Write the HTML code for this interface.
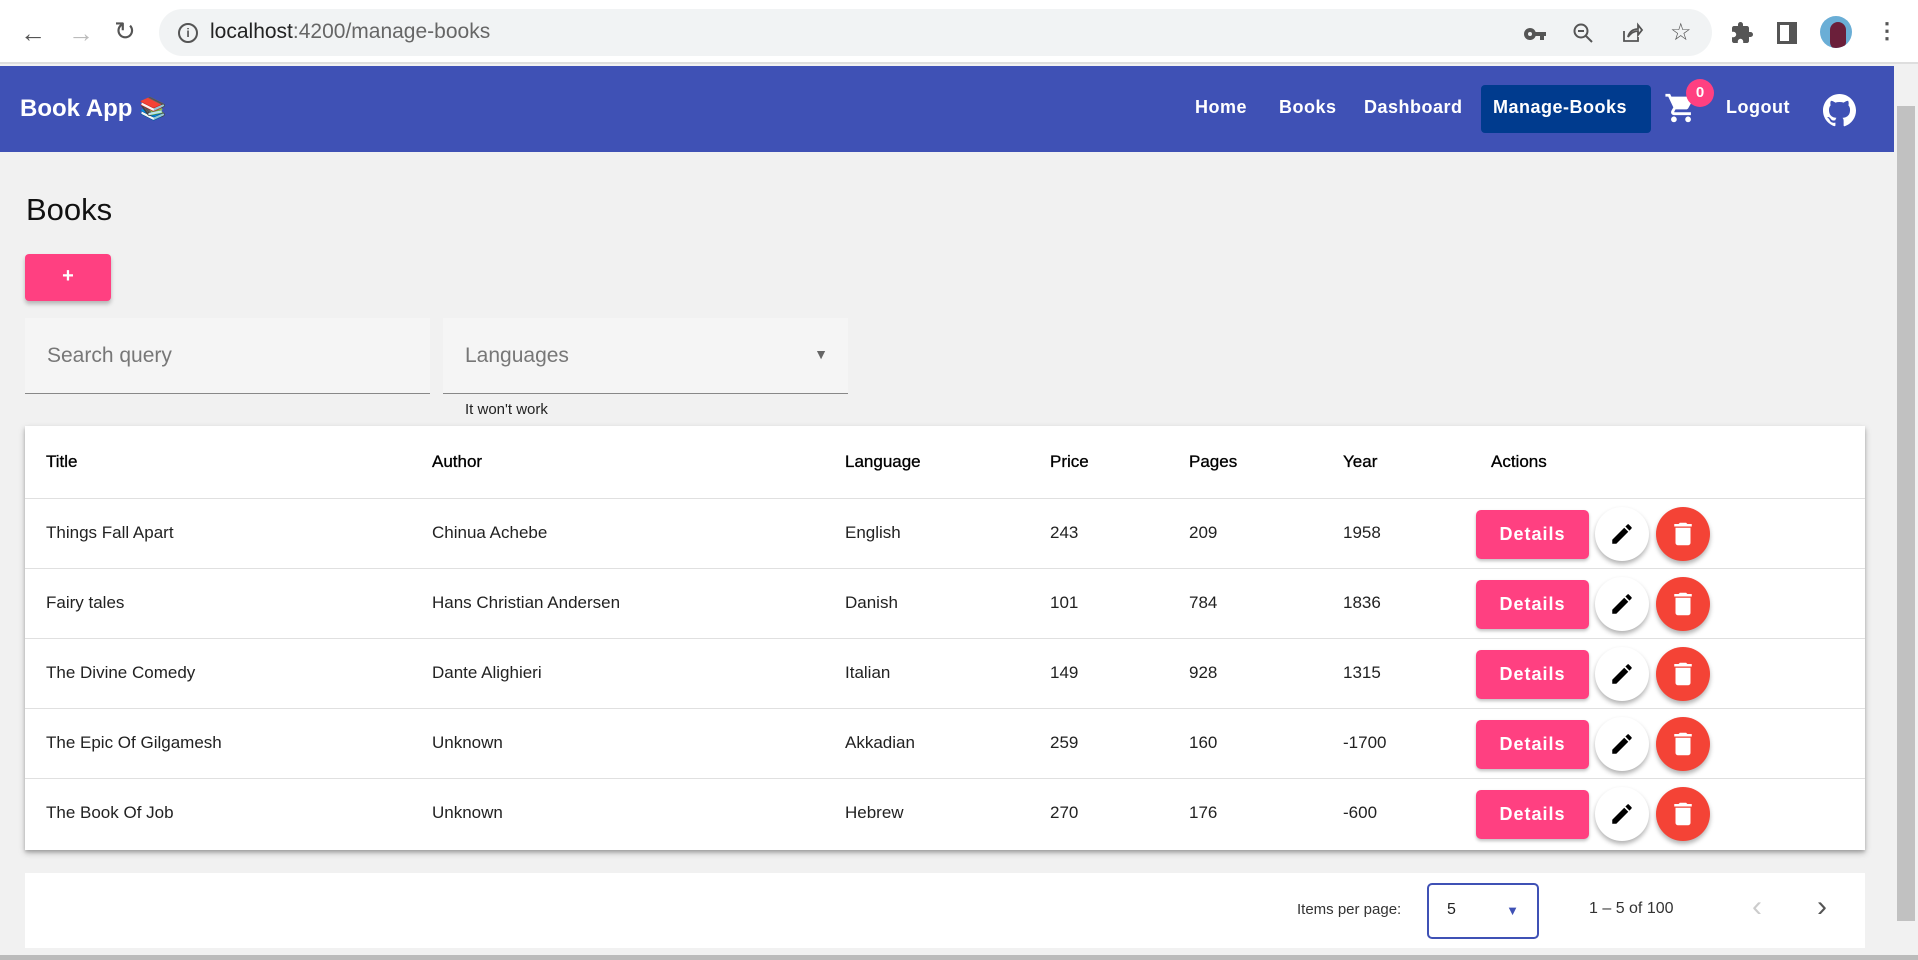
<!DOCTYPE html>
<html><head><meta charset="utf-8"><style>
*{box-sizing:border-box;margin:0;padding:0}
body{width:1918px;height:960px;overflow:hidden;background:#f1f1f1;font-family:"Liberation Sans",sans-serif;position:relative}
.abs{position:absolute}
.chrome{left:0;top:0;width:1918px;height:64px;background:#fff;border-bottom:2px solid #dedede}
.addr{left:159px;top:9px;width:1553px;height:47px;background:#f1f3f4;border-radius:24px}
.nav{left:0;top:66px;width:1894px;height:86px;background:#3f51b5;color:#fff}
.nav .t{font-weight:bold;font-size:24px;position:absolute;top:29px;left:20px}
.nl{position:absolute;top:31px;font-size:18px;font-weight:bold;letter-spacing:.5px}
.scroll{left:1894px;top:66px;width:24px;height:889px;background:#f1f1f1}
.card{left:25px;top:426px;width:1840px;height:424px;background:#fff;box-shadow:0 3px 6px rgba(0,0,0,.25),0 2px 3px rgba(0,0,0,.15)}
.row{position:absolute;left:0;width:1840px;height:70px;border-bottom:1px solid #e0e0e0;font-size:17px;color:#222}
.row span{position:absolute;top:24px}
.hdr span{color:#000;-webkit-text-stroke:0.3px #000}
.det{position:absolute;left:1451px;top:11px;width:113px;height:49px;background:#ff4081;border-radius:5px;color:#fff;font-weight:bold;font-size:18px;text-align:center;line-height:49px;letter-spacing:1px;box-shadow:0 2px 3px rgba(0,0,0,.25)}
.circ{position:absolute;top:8px;width:54px;height:54px;border-radius:50%;box-shadow:0 3px 5px rgba(0,0,0,.3)}
.fld{background:#f5f5f5;border-bottom:1px solid #888;height:76px;top:318px;font-size:21px;color:#777}
</style></head><body>
<div class="abs chrome"></div>
<div class="abs" style="left:20px;top:18px;font-size:26px;color:#555">&#8592;</div>
<div class="abs" style="left:68px;top:18px;font-size:26px;color:#bbb">&#8594;</div>
<div class="abs" style="left:114px;top:16px;font-size:26px;color:#555">&#8635;</div>
<div class="abs addr"></div>
<div class="abs" style="left:178px;top:23px;width:20px;height:20px;border:2px solid #555;border-radius:50%;font-size:12px;text-align:center;line-height:16px;color:#555;font-weight:bold">i</div>
<div class="abs" style="left:210px;top:20px;font-size:21px;color:#222">localhost<span style="color:#666">:4200/manage-books</span></div>
<svg class="abs" style="left:1523px;top:22px" width="24" height="24" viewBox="0 0 24 24"><path fill="#555" d="M12.65 10A6 6 0 1 0 12.65 14H17v4h4v-4h2v-4H12.65zM7 14a2 2 0 1 1 0-4 2 2 0 0 1 0 4z"/></svg>
<svg class="abs" style="left:1571px;top:21px" width="24" height="24" viewBox="0 0 24 24"><circle cx="10" cy="10" r="6.5" fill="none" stroke="#555" stroke-width="2"/><path d="M7 10h6M15 15l6 6" stroke="#555" stroke-width="2"/></svg>
<svg class="abs" style="left:1620px;top:21px" width="24" height="24" viewBox="0 0 24 24"><path fill="none" stroke="#555" stroke-width="1.8" d="M4 10v10h14v-4M8 16c1-5 5-8 10-8V4l4 5-4 5v-4c-4 0-7 2-10 6z"/></svg>
<div class="abs" style="left:1670px;top:18px;font-size:24px;color:#555">&#9734;</div>
<svg class="abs" style="left:1730px;top:21px" width="24" height="24" viewBox="0 0 24 24"><path fill="#555" d="M20.5 11H19V7c0-1.1-.9-2-2-2h-4V3.5a2.5 2.5 0 0 0-5 0V5H4c-1.1 0-2 .9-2 2v3.8h1.5a2.7 2.7 0 0 1 0 5.4H2V20c0 1.1.9 2 2 2h3.8v-1.5a2.7 2.7 0 0 1 5.4 0V22H17c1.1 0 2-.9 2-2v-4h1.5a2.5 2.5 0 0 0 0-5z"/></svg>
<div class="abs" style="left:1777px;top:22px;width:20px;height:22px;border:3px solid #555;border-right-width:8px"></div>
<div class="abs" style="left:1820px;top:16px;width:32px;height:32px;border-radius:50%;background:#6aaed6;overflow:hidden"><div style="position:absolute;left:10px;top:6px;width:16px;height:28px;border-radius:8px;background:#6b1f3a"></div></div>
<div class="abs" style="left:1876px;top:18px;font-size:22px;color:#555;font-weight:bold">&#8942;</div>
<div class="abs nav">
<div class="t">Book App <span style="font-size:22px">📚</span></div>
<div class="nl" style="left:1195px">Home</div>
<div class="nl" style="left:1279px">Books</div>
<div class="nl" style="left:1364px">Dashboard</div>
<div style="position:absolute;left:1481px;top:19px;width:170px;height:48px;background:#003b8e;border-radius:4px"></div>
<div class="nl" style="left:1493px">Manage-Books</div>
<svg style="position:absolute;left:1664px;top:25px" width="34" height="34" viewBox="0 0 24 24"><path fill="#fff" d="M7 18c-1.1 0-2 .9-2 2s.9 2 2 2 2-.9 2-2-.9-2-2-2zM1 2v2h2l3.6 7.6-1.4 2.4c-.1.3-.2.6-.2 1 0 1.1.9 2 2 2h12v-2H7.4c-.1 0-.2-.1-.2-.2v-.1l.9-1.7h7.4c.8 0 1.4-.4 1.700-1l3.6-6.5c.1-.2.1-.3.1-.5 0-.6-.4-1-1-1H5.2l-.9-2H1zm16 16c-1.1 0-2 .9-2 2s.9 2 2 2 2-.9 2-2-.9-2-2-2z"/></svg>
<div style="position:absolute;left:1686px;top:13px;width:28px;height:28px;border-radius:50%;background:#ff4081;font-size:15px;font-weight:bold;text-align:center;line-height:28px">0</div>
<div class="nl" style="left:1726px">Logout</div>
<svg style="position:absolute;left:1823px;top:28px" width="33" height="33" viewBox="0 0 16 16"><path fill="#fff" d="M8 0C3.58 0 0 3.58 0 8c0 3.54 2.290 6.53 5.47 7.59.4.07.55-.17.55-.38v-1.33c-2.230.48-2.7-1.07-2.7-1.07-.36-.92-.89-1.17-.89-1.17-.73-.5.05-.49.05-.49.8.06 1.23.83 1.23.83.71 1.22 1.87.87 2.33.66.07-.52.28-.87.51-1.07-1.78-.2-3.64-.89-3.64-3.95 0-.87.31-1.59.82-2.15-.08-.2-.36-1.02.08-2.12 0 0 .67-.21 2.2.82a7.6 7.6 0 0 1 4 0c1.53-1.04 2.2-.82 2.2-.82.44 1.1.16 1.92.08 2.12.51.56.82 1.27.82 2.15 0 3.07-1.87 3.75-3.65 3.95.29.25.54.73.54 1.48v2.2c0 .21.15.46.55.38A8.01 8.01 0 0 0 16 8c0-4.42-3.58-8-8-8z"/></svg>
</div>
<div class="abs scroll"><div style="position:absolute;left:3px;top:40px;width:18px;height:815px;background:#c1c1c1"></div></div>
<div class="abs" style="left:26px;top:192px;font-size:31px;color:#111">Books</div>
<div class="abs" style="left:25px;top:254px;width:86px;height:47px;background:#ff4081;border-radius:4px;color:#fff;font-size:20px;font-weight:bold;text-align:center;line-height:45px;box-shadow:0 3px 4px rgba(0,0,0,.25)">+</div>
<div class="abs fld" style="left:25px;width:405px"><span style="position:absolute;left:22px;top:26px">Search query</span></div>
<div class="abs fld" style="left:443px;width:405px"><span style="position:absolute;left:22px;top:26px">Languages</span><span style="position:absolute;right:20px;top:28px;font-size:14px;color:#666">&#9660;</span></div>
<div class="abs" style="left:465px;top:401px;font-size:15px;color:#222">It won't work</div>
<div class="abs card">
<div class="row hdr" style="top:0;height:73px"><span style="left:21px;top:26px">Title</span><span style="left:407px;top:26px">Author</span><span style="left:820px;top:26px">Language</span><span style="left:1025px;top:26px">Price</span><span style="left:1164px;top:26px">Pages</span><span style="left:1318px;top:26px">Year</span><span style="left:1466px;top:26px">Actions</span></div>
<div class="row" style="top:73px"><span style="left:21px">Things Fall Apart</span><span style="left:407px">Chinua Achebe</span><span style="left:820px">English</span><span style="left:1025px">243</span><span style="left:1164px">209</span><span style="left:1318px">1958</span><div class="det">Details</div><div class="circ" style="left:1570px;background:#fff"><svg style="margin:14px" width="26" height="26" viewBox="0 0 24 24"><path d="M3 17.25V21h3.75L17.81 9.94l-3.75-3.75L3 17.25zM20.71 7.04a1 1 0 0 0 0-1.41l-2.34-2.34a1 1 0 0 0-1.41 0l-1.83 1.83 3.75 3.75 1.83-1.83z"/></svg></div><div class="circ" style="left:1631px;background:#f44336"><svg style="margin:12px" width="30" height="30" viewBox="0 0 24 24"><path fill="#fff" d="M6 19c0 1.1.9 2 2 2h8c1.1 0 2-.9 2-2V7H6v12zM19 4h-3.5l-1-1h-5l-1 1H5v2h14V4z"/></svg></div></div>
<div class="row" style="top:143px"><span style="left:21px">Fairy tales</span><span style="left:407px">Hans Christian Andersen</span><span style="left:820px">Danish</span><span style="left:1025px">101</span><span style="left:1164px">784</span><span style="left:1318px">1836</span><div class="det">Details</div><div class="circ" style="left:1570px;background:#fff"><svg style="margin:14px" width="26" height="26" viewBox="0 0 24 24"><path d="M3 17.25V21h3.75L17.81 9.94l-3.75-3.75L3 17.25zM20.71 7.04a1 1 0 0 0 0-1.41l-2.34-2.34a1 1 0 0 0-1.41 0l-1.83 1.83 3.75 3.75 1.83-1.83z"/></svg></div><div class="circ" style="left:1631px;background:#f44336"><svg style="margin:12px" width="30" height="30" viewBox="0 0 24 24"><path fill="#fff" d="M6 19c0 1.1.9 2 2 2h8c1.1 0 2-.9 2-2V7H6v12zM19 4h-3.5l-1-1h-5l-1 1H5v2h14V4z"/></svg></div></div>
<div class="row" style="top:213px"><span style="left:21px">The Divine Comedy</span><span style="left:407px">Dante Alighieri</span><span style="left:820px">Italian</span><span style="left:1025px">149</span><span style="left:1164px">928</span><span style="left:1318px">1315</span><div class="det">Details</div><div class="circ" style="left:1570px;background:#fff"><svg style="margin:14px" width="26" height="26" viewBox="0 0 24 24"><path d="M3 17.25V21h3.75L17.81 9.94l-3.75-3.75L3 17.25zM20.71 7.04a1 1 0 0 0 0-1.41l-2.34-2.34a1 1 0 0 0-1.41 0l-1.83 1.83 3.75 3.75 1.83-1.83z"/></svg></div><div class="circ" style="left:1631px;background:#f44336"><svg style="margin:12px" width="30" height="30" viewBox="0 0 24 24"><path fill="#fff" d="M6 19c0 1.1.9 2 2 2h8c1.1 0 2-.9 2-2V7H6v12zM19 4h-3.5l-1-1h-5l-1 1H5v2h14V4z"/></svg></div></div>
<div class="row" style="top:283px"><span style="left:21px">The Epic Of Gilgamesh</span><span style="left:407px">Unknown</span><span style="left:820px">Akkadian</span><span style="left:1025px">259</span><span style="left:1164px">160</span><span style="left:1318px">-1700</span><div class="det">Details</div><div class="circ" style="left:1570px;background:#fff"><svg style="margin:14px" width="26" height="26" viewBox="0 0 24 24"><path d="M3 17.25V21h3.75L17.81 9.94l-3.75-3.75L3 17.25zM20.71 7.04a1 1 0 0 0 0-1.41l-2.34-2.34a1 1 0 0 0-1.41 0l-1.83 1.83 3.75 3.75 1.83-1.83z"/></svg></div><div class="circ" style="left:1631px;background:#f44336"><svg style="margin:12px" width="30" height="30" viewBox="0 0 24 24"><path fill="#fff" d="M6 19c0 1.1.9 2 2 2h8c1.1 0 2-.9 2-2V7H6v12zM19 4h-3.5l-1-1h-5l-1 1H5v2h14V4z"/></svg></div></div>
<div class="row" style="top:353px;border-bottom:none"><span style="left:21px">The Book Of Job</span><span style="left:407px">Unknown</span><span style="left:820px">Hebrew</span><span style="left:1025px">270</span><span style="left:1164px">176</span><span style="left:1318px">-600</span><div class="det">Details</div><div class="circ" style="left:1570px;background:#fff"><svg style="margin:14px" width="26" height="26" viewBox="0 0 24 24"><path d="M3 17.25V21h3.75L17.81 9.94l-3.75-3.75L3 17.25zM20.71 7.04a1 1 0 0 0 0-1.41l-2.34-2.34a1 1 0 0 0-1.41 0l-1.83 1.83 3.75 3.75 1.83-1.83z"/></svg></div><div class="circ" style="left:1631px;background:#f44336"><svg style="margin:12px" width="30" height="30" viewBox="0 0 24 24"><path fill="#fff" d="M6 19c0 1.1.9 2 2 2h8c1.1 0 2-.9 2-2V7H6v12zM19 4h-3.5l-1-1h-5l-1 1H5v2h14V4z"/></svg></div></div>
</div>
<div class="abs" style="left:25px;top:873px;width:1840px;height:75px;background:#fff"></div>
<div class="abs" style="left:1297px;top:901px;font-size:15px;color:#333">Items per page:</div>
<div class="abs" style="left:1427px;top:883px;width:112px;height:56px;border:2px solid #3f51b5;border-radius:5px"><span style="position:absolute;left:18px;top:16px;font-size:16px;color:#222">5</span><span style="position:absolute;right:18px;top:18px;font-size:13px;color:#3f51b5">&#9660;</span></div>
<div class="abs" style="left:1589px;top:900px;font-size:16px;color:#333">1 – 5 of 100</div>
<div class="abs" style="left:1752px;top:890px;font-size:30px;color:#ccc">&#8249;</div>
<div class="abs" style="left:1817px;top:890px;font-size:30px;color:#555">&#8250;</div>
<div class="abs" style="left:0;top:955px;width:1918px;height:5px;background:#bbb"></div>
</body></html>
